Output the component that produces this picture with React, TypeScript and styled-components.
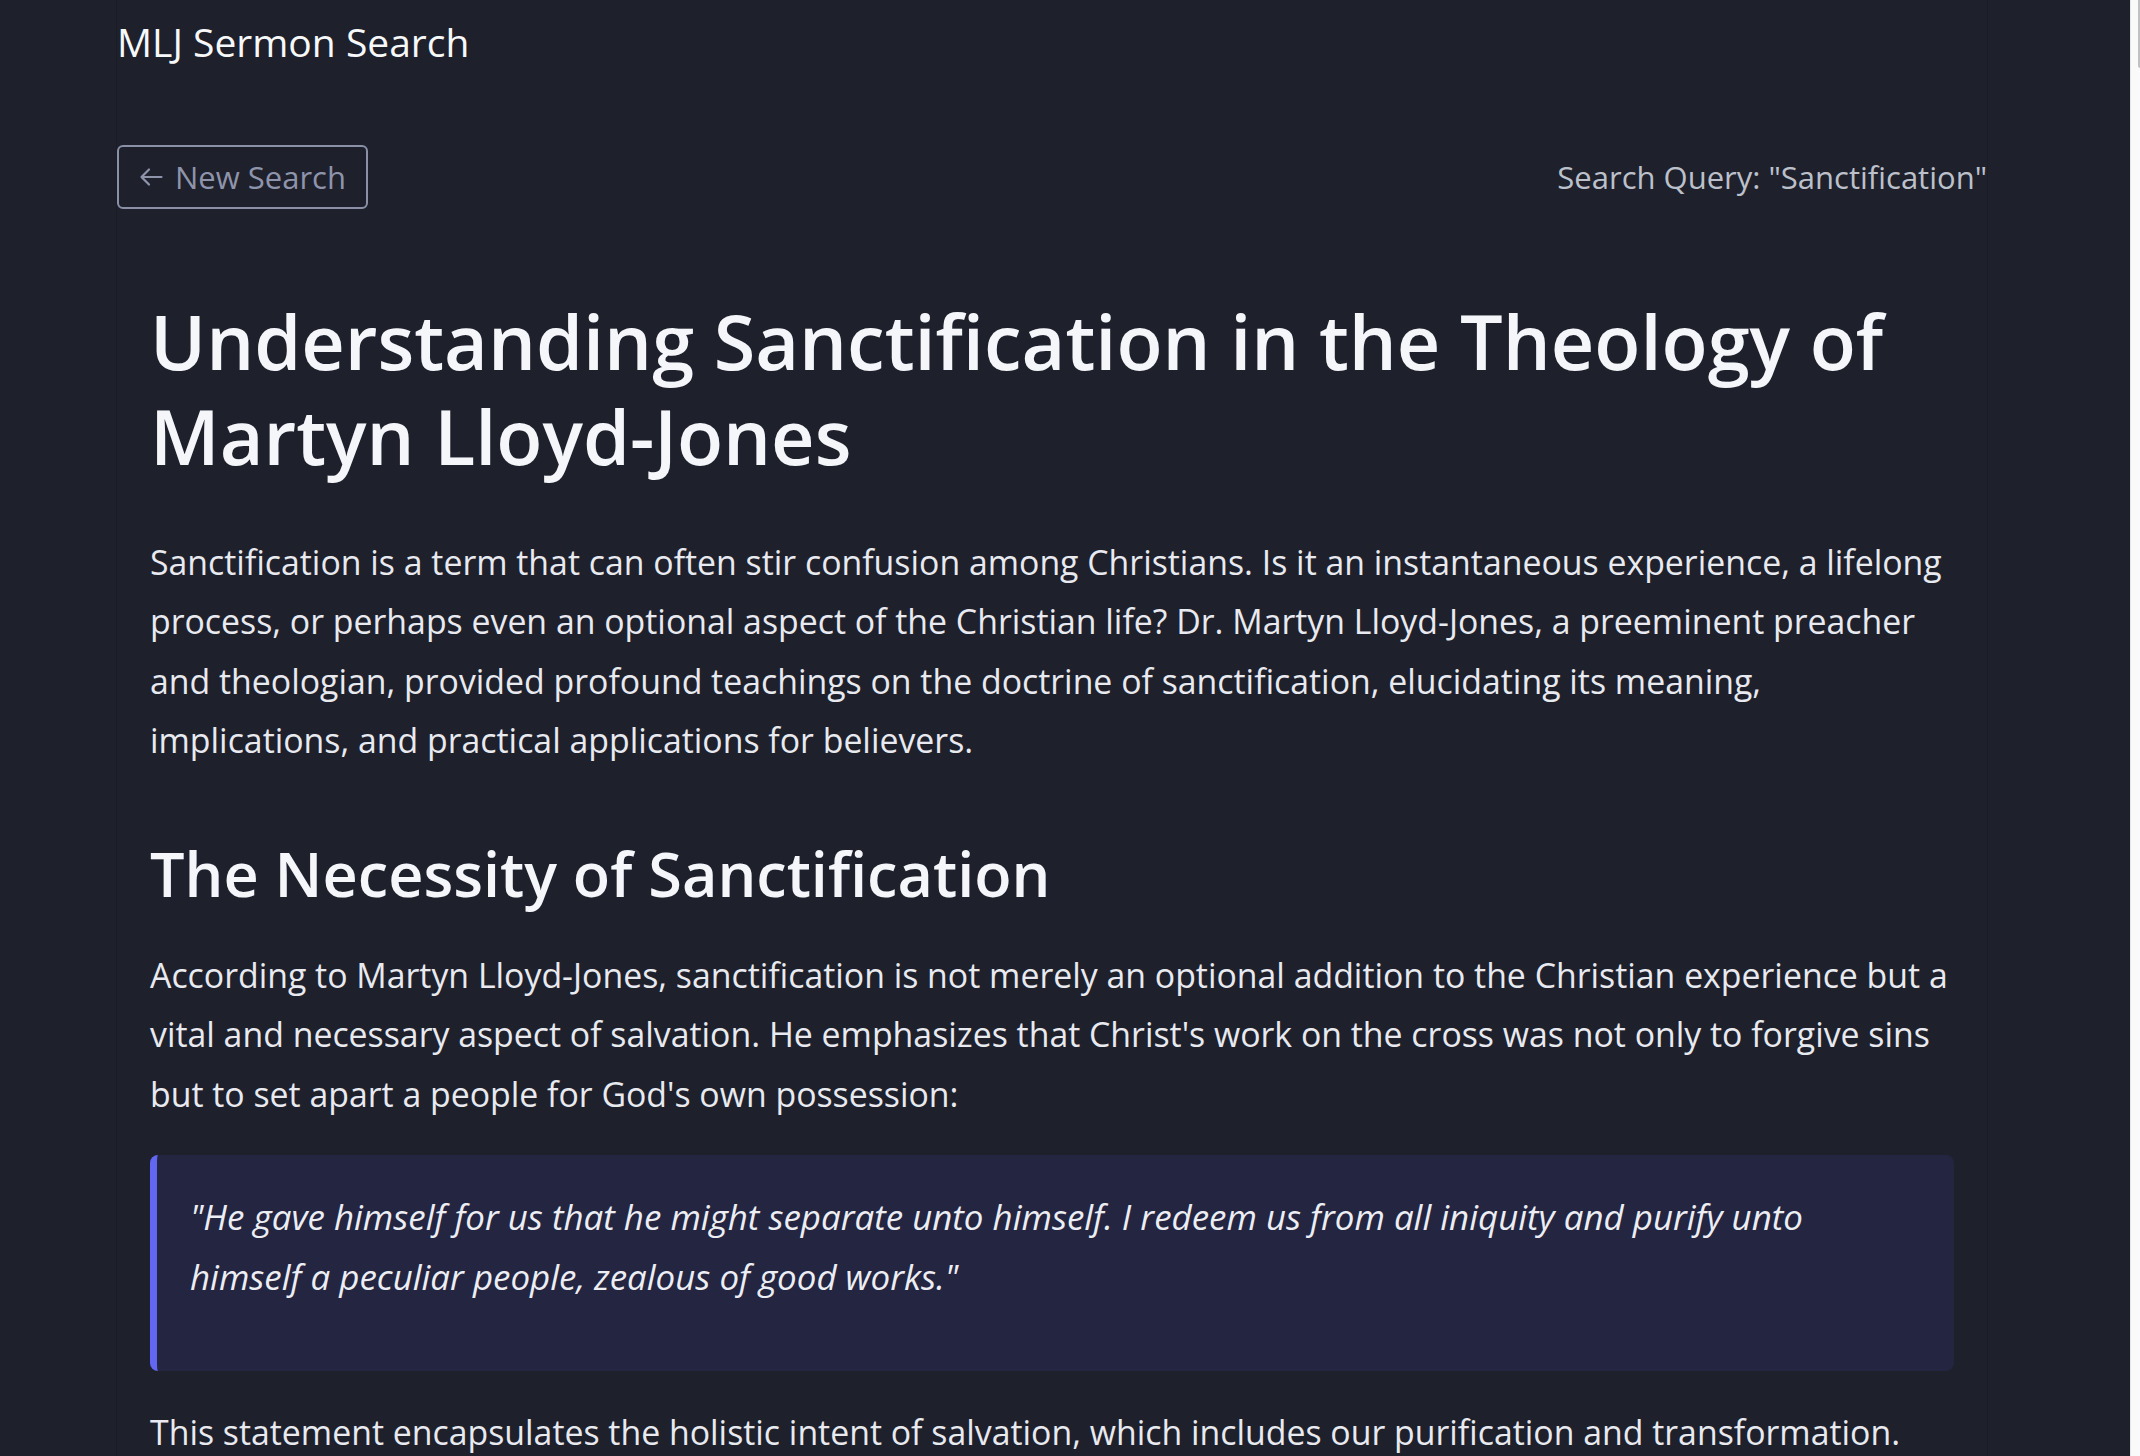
import React from "react";
import styled, { createGlobalStyle } from "styled-components";

const GlobalStyle = createGlobalStyle`
  html, body {
    margin: 0;
    padding: 0;
    overflow: hidden;
    background: #1e202c;
  }
  body {
    font-family: "Open Sans", "Noto Sans", sans-serif;
    color: #e8eaf0;
    -webkit-font-smoothing: antialiased;
  }
  * { box-sizing: border-box; }
`;

const Page = styled.div`
  min-height: 100vh;
  padding-left: 116px;
`;

const Column = styled.div`
  width: 1872px;
  min-height: 100vh;
  border-left: 1px solid #1a1c27;
  border-right: 1px solid #1a1c27;
  display: flex;
  flex-direction: column;
`;

const Header = styled.header`
  padding-top: 19px;
  font-size: 39px;
  line-height: 46px;
  font-weight: 400;
  color: #f7f8fa;
`;

const Toolbar = styled.div`
  margin-top: 80px;
  display: flex;
  align-items: center;
  justify-content: space-between;
`;

const BackButton = styled.button`
  height: 64px;
  display: inline-flex;
  align-items: center;
  gap: 12px;
  padding: 0 20px;
  background: transparent;
  border: 2px solid #8a90a6;
  border-radius: 6px;
  color: #8e94aa;
  font-family: "Open Sans", "Noto Sans", sans-serif;
  font-size: 31px;
  line-height: 40px;
  cursor: pointer;
`;

const Query = styled.div`
  font-size: 31px;
  line-height: 40px;
  color: #bcc0ca;
`;

const Article = styled.article`
  padding: 0 33px;
  display: flex;
  flex-direction: column;
`;

const Title = styled.h1`
  margin: 84px 0 0;
  font-size: 75.6px;
  line-height: 95px;
  font-weight: 600;
  color: #f4f6fa;
`;

const Heading = styled.h2`
  margin: 66px 0 0;
  font-size: 61.2px;
  line-height: 73px;
  font-weight: 600;
  color: #f4f6fa;
`;

const Para = styled.p<{ $gap: number }>`
  margin: ${(p) => p.$gap}px 0 0;
  font-size: 33.85px;
  line-height: 59.5px;
  color: #e8eaf0;
`;

const Quote = styled.blockquote`
  margin: 31px 0 0;
  padding: 32px 40px 65px 33px;
  background: #232541;
  border-left: 7px solid #6366f1;
  border-radius: 8px;
`;

const QuoteText = styled.p`
  margin: 0;
  font-size: 34.9px;
  line-height: 59.5px;
  font-style: italic;
  color: #eceef4;
`;

const Scrollbar = styled.div`
  position: fixed;
  top: 0;
  right: 0;
  width: 10px;
  height: 100vh;
  background: #fafafa;
  border-left: 1px solid #e6e6e6;
`;

const Thumb = styled.div`
  position: absolute;
  top: 0;
  right: 0;
  width: 2px;
  height: 68px;
  background: #c1c1c1;
  border-bottom-left-radius: 2px;
`;

const ArrowLeft = () => (
  <svg width="24" height="20" viewBox="0 0 24 20" fill="none" aria-hidden="true">
    <path
      d="M22.5 10H2.5M10 2.5L2.5 10L10 17.5"
      stroke="currentColor"
      strokeWidth="2.2"
      strokeLinecap="round"
      strokeLinejoin="round"
    />
  </svg>
);

export default function App() {
  return (
    <>
      <GlobalStyle />
      <Page>
        <Column>
          <Header>MLJ Sermon Search</Header>
          <Toolbar>
            <BackButton>
              <ArrowLeft />
              New Search
            </BackButton>
            <Query>Search Query: "Sanctification"</Query>
          </Toolbar>
          <Article>
            <Title>Understanding Sanctification in the Theology of Martyn Lloyd-Jones</Title>
            <Para $gap={49.5}>
              Sanctification is a term that can often stir confusion among Christians. Is it an
              instantaneous experience, a lifelong process, or perhaps even an optional aspect of the
              Christian life? Dr. Martyn Lloyd-Jones, a preeminent preacher and theologian, provided
              profound teachings on the doctrine of sanctification, elucidating its meaning,
              implications, and practical applications for believers.
            </Para>
            <Heading>The Necessity of Sanctification</Heading>
            <Para $gap={36}>
              According to Martyn Lloyd-Jones, sanctification is not merely an optional addition to the
              Christian experience but a vital and necessary aspect of salvation. He emphasizes that
              Christ's work on the cross was not only to forgive sins but to set apart a people for
              God's own possession:
            </Para>
            <Quote>
              <QuoteText>
                "He gave himself for us that he might separate unto himself. I redeem us from all
                iniquity and purify unto himself a peculiar people, zealous of good works."
              </QuoteText>
            </Quote>
            <Para $gap={32}>
              This statement encapsulates the holistic intent of salvation, which includes our
              purification and transformation.
            </Para>
          </Article>
        </Column>
      </Page>
      <Scrollbar>
        <Thumb />
      </Scrollbar>
    </>
  );
}
